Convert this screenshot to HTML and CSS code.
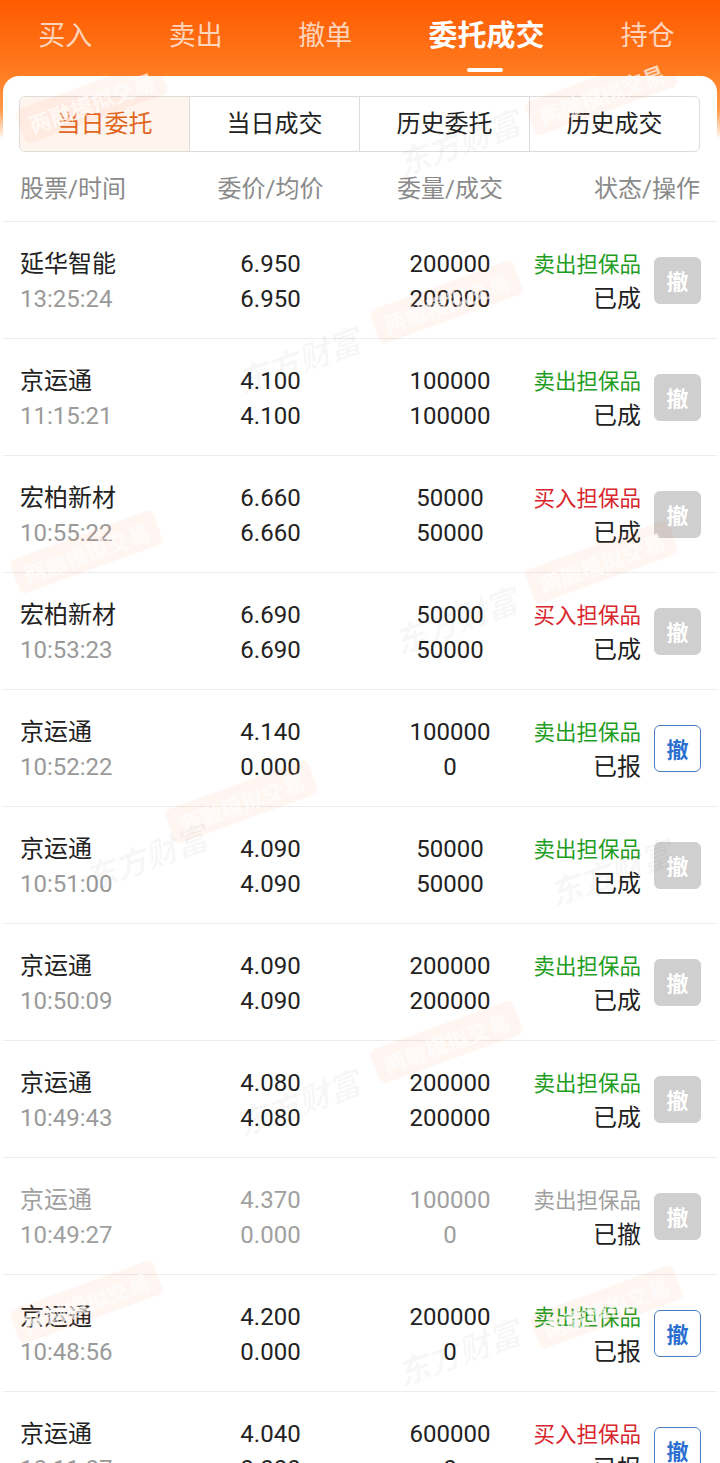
FILE: index.html
```html
<!DOCTYPE html>
<html lang="zh-CN">
<head>
    <meta charset="UTF-8">
    <meta name="viewport" content="width=device-width, initial-scale=1.0">
    <title>委托成交</title>
    <link rel="stylesheet" href="styles.css">
</head>
<body>

    <!-- 顶部标签 -->
    <div class="top-tabs">
        <div class="top-tab">买入</div>
        <div class="top-tab">卖出</div>
        <div class="top-tab">撤单</div>
        <div class="top-tab active">委托成交</div>
        <div class="top-tab">持仓</div>
    </div>

    <div class="card">
        <!-- 分段选择 -->
        <div class="segments">
            <div class="segment active">当日委托</div>
            <div class="segment">当日成交</div>
            <div class="segment">历史委托</div>
            <div class="segment">历史成交</div>
        </div>

        <div class="table-head">
            <span class="col-name">股票/时间</span>
            <span class="col-mid">委价/均价</span>
            <span class="col-mid">委量/成交</span>
            <span class="col-right">状态/操作</span>
        </div>

        <div class="rows">
            <div class="row">
                <div class="cell name"><span>延华智能</span><span class="sub">13:25:24</span></div>
                <div class="cell num"><span>6.950</span><span>6.950</span></div>
                <div class="cell num"><span>200000</span><span>200000</span></div>
                <div class="cell status"><span class="sell">卖出担保品</span><span>已成</span></div>
                <div class="btn done">撤</div>
            </div>
            <div class="row">
                <div class="cell name"><span>京运通</span><span class="sub">11:15:21</span></div>
                <div class="cell num"><span>4.100</span><span>4.100</span></div>
                <div class="cell num"><span>100000</span><span>100000</span></div>
                <div class="cell status"><span class="sell">卖出担保品</span><span>已成</span></div>
                <div class="btn done">撤</div>
            </div>
            <div class="row">
                <div class="cell name"><span>宏柏新材</span><span class="sub">10:55:22</span></div>
                <div class="cell num"><span>6.660</span><span>6.660</span></div>
                <div class="cell num"><span>50000</span><span>50000</span></div>
                <div class="cell status"><span class="buy">买入担保品</span><span>已成</span></div>
                <div class="btn done">撤</div>
            </div>
            <div class="row">
                <div class="cell name"><span>宏柏新材</span><span class="sub">10:53:23</span></div>
                <div class="cell num"><span>6.690</span><span>6.690</span></div>
                <div class="cell num"><span>50000</span><span>50000</span></div>
                <div class="cell status"><span class="buy">买入担保品</span><span>已成</span></div>
                <div class="btn done">撤</div>
            </div>
            <div class="row">
                <div class="cell name"><span>京运通</span><span class="sub">10:52:22</span></div>
                <div class="cell num"><span>4.140</span><span>0.000</span></div>
                <div class="cell num"><span>100000</span><span>0</span></div>
                <div class="cell status"><span class="sell">卖出担保品</span><span>已报</span></div>
                <div class="btn open">撤</div>
            </div>
            <div class="row">
                <div class="cell name"><span>京运通</span><span class="sub">10:51:00</span></div>
                <div class="cell num"><span>4.090</span><span>4.090</span></div>
                <div class="cell num"><span>50000</span><span>50000</span></div>
                <div class="cell status"><span class="sell">卖出担保品</span><span>已成</span></div>
                <div class="btn done">撤</div>
            </div>
            <div class="row">
                <div class="cell name"><span>京运通</span><span class="sub">10:50:09</span></div>
                <div class="cell num"><span>4.090</span><span>4.090</span></div>
                <div class="cell num"><span>200000</span><span>200000</span></div>
                <div class="cell status"><span class="sell">卖出担保品</span><span>已成</span></div>
                <div class="btn done">撤</div>
            </div>
            <div class="row">
                <div class="cell name"><span>京运通</span><span class="sub">10:49:43</span></div>
                <div class="cell num"><span>4.080</span><span>4.080</span></div>
                <div class="cell num"><span>200000</span><span>200000</span></div>
                <div class="cell status"><span class="sell">卖出担保品</span><span>已成</span></div>
                <div class="btn done">撤</div>
            </div>
            <div class="row cancelled">
                <div class="cell name"><span>京运通</span><span class="sub">10:49:27</span></div>
                <div class="cell num"><span>4.370</span><span>0.000</span></div>
                <div class="cell num"><span>100000</span><span>0</span></div>
                <div class="cell status"><span class="sell">卖出担保品</span><span class="state">已撤</span></div>
                <div class="btn done">撤</div>
            </div>
            <div class="row">
                <div class="cell name"><span>京运通</span><span class="sub">10:48:56</span></div>
                <div class="cell num"><span>4.200</span><span>0.000</span></div>
                <div class="cell num"><span>200000</span><span>0</span></div>
                <div class="cell status"><span class="sell">卖出担保品</span><span>已报</span></div>
                <div class="btn open">撤</div>
            </div>
            <div class="row">
                <div class="cell name"><span>京运通</span><span class="sub">10:11:07</span></div>
                <div class="cell num"><span>4.040</span><span>0.000</span></div>
                <div class="cell num"><span>600000</span><span>0</span></div>
                <div class="cell status"><span class="buy">买入担保品</span><span>已报</span></div>
                <div class="btn open">撤</div>
            </div>
        </div>
    </div>

    <!-- 水印 -->
    <div class="watermarks">
        <span class="wm-tag" style="left:20px;top:70px">两融模拟交易</span>
        <span class="wm-tag" style="left:530px;top:62px">两融模拟交易</span>
        <span class="wm-logo" style="left:398px;top:100px">东方财富</span>
        <span class="wm-tag" style="left:375px;top:270px">两融模拟交易</span>
        <span class="wm-logo" style="left:238px;top:318px">东方财富</span>
        <span class="wm-tag" style="left:15px;top:520px">两融模拟交易</span>
        <span class="wm-tag" style="left:530px;top:530px">两融模拟交易</span>
        <span class="wm-logo" style="left:395px;top:578px">东方财富</span>
        <span class="wm-tag" style="left:170px;top:770px">两融模拟交易</span>
        <span class="wm-logo" style="left:85px;top:815px">东方财富</span>
        <span class="wm-logo" style="left:550px;top:830px">东方财富</span>
        <span class="wm-tag" style="left:375px;top:1010px">两融模拟交易</span>
        <span class="wm-logo" style="left:238px;top:1060px">东方财富</span>
        <span class="wm-tag" style="left:15px;top:1270px">两融模拟交易</span>
        <span class="wm-tag" style="left:535px;top:1275px">两融模拟交易</span>
        <span class="wm-logo" style="left:398px;top:1310px">东方财富</span>
    </div>

</body>
</html>
```

FILE: styles.css
```css
/* 页面基础 */
body {
    margin: 0;
    height: 1463px;
    overflow: hidden;
    position: relative;
    font-family: Roboto, "Noto Sans CJK SC", sans-serif;
    color: #222;
    background: linear-gradient(to bottom, #ff5a00 0px, #ff7a1e 70px, #ff9a48 110px, #ffffff 140px);
}

/* 顶部标签栏 */
.top-tabs {
    display: flex;
    height: 76px;
    padding: 0 8px 0 0;
}

.top-tab {
    position: relative;
    color: rgba(255, 255, 255, 0.72);
    font-size: 27px;
    line-height: 72px;
    text-align: center;
}

.top-tab:nth-child(1) { width: 132px; }
.top-tab:nth-child(2) { width: 132px; }
.top-tab:nth-child(3) { width: 130px; }
.top-tab:nth-child(4) { width: 196px; }
.top-tab:nth-child(5) { width: 130px; }

.top-tab.active {
    color: #fff;
    font-weight: bold;
    font-size: 29px;
}

.top-tab.active::after {
    content: "";
    position: absolute;
    left: 50%;
    bottom: 4px;
    width: 36px;
    height: 4px;
    margin-left: -20px;
    border-radius: 2px;
    background: #fff;
}

/* 白色卡片 */
.card {
    background: #fff;
    margin: 0 3px;
    border-radius: 16px 16px 0 0;
    padding-top: 20px;
}

/* 分段选择 */
.segments {
    display: flex;
    margin: 0 17px 0 16px;
    height: 54px;
    border: 1px solid #dcdcdc;
    border-radius: 6px;
    overflow: hidden;
}

.segment {
    flex: 1;
    text-align: center;
    line-height: 54px;
    font-size: 24px;
    color: #222;
    border-left: 1px solid #dcdcdc;
}

.segment:first-child {
    border-left: none;
}

.segment.active {
    background: #fff5ee;
    color: #e0661e;
}

/* 表头 */
.table-head {
    display: grid;
    grid-template-columns: 160px 181px 178px 1fr;
    align-items: center;
    height: 69px;
    padding: 0 17px;
    border-bottom: 1px solid #ececec;
    color: #8a8a8a;
    font-size: 24px;
}

.col-mid { text-align: center; }
.col-right { text-align: right; }

/* 列表行 */
.row {
    display: grid;
    grid-template-columns: 160px 181px 178px 102px 60px;
    align-items: center;
    height: 116px;
    padding: 0 17px;
    border-bottom: 1px solid #ececec;
    font-size: 24px;
}

.row .btn {
    margin-left: 13px;
}

.cell {
    display: flex;
    flex-direction: column;
    line-height: 35px;
    padding-top: 4px;
}

.cell.num {
    align-items: center;
}

.cell.status {
    align-items: flex-end;
    white-space: nowrap;
}

.sub {
    color: #9a9a9a;
}

.cell.status span:first-child {
    font-size: 21.5px;
}

.sell { color: #1f9d1f; }
.buy { color: #d8262e; }

/* 撤单按钮 */
.btn {
    width: 45px;
    height: 45px;
    border-radius: 6px;
    text-align: center;
    line-height: 45px;
    font-size: 22px;
    font-weight: bold;
    font-family: "Noto Sans CJK SC", sans-serif;
}

.btn.done {
    background: #cfcfcf;
    color: #fff;
    border: 1px solid #cfcfcf;
}

.btn.open {
    background: #fff;
    color: #2b6fd0;
    border: 1px solid #4a7fc2;
}

/* 已撤单行 */
.cancelled .cell span,
.cancelled .sell {
    color: #a0a0a0;
}

.cancelled .cell .state {
    color: #222;
}

/* 水印 */
.watermarks {
    position: absolute;
    inset: 0;
    pointer-events: none;
}

.wm-tag,
.wm-logo {
    position: absolute;
    transform: rotate(-20deg);
    transform-origin: left center;
    white-space: nowrap;
    font-family: "Noto Sans CJK SC", sans-serif;
    font-weight: bold;
}

.wm-tag {
    padding: 2px 10px;
    font-size: 22px;
    border-radius: 6px;
    background: rgba(255, 120, 60, 0.07);
    color: rgba(255, 255, 255, 0.7);
    margin-top: 40px;
}

.wm-logo {
    font-size: 32px;
    color: rgba(0, 0, 0, 0.04);
    margin-top: 40px;
    font-style: italic;
}
```
